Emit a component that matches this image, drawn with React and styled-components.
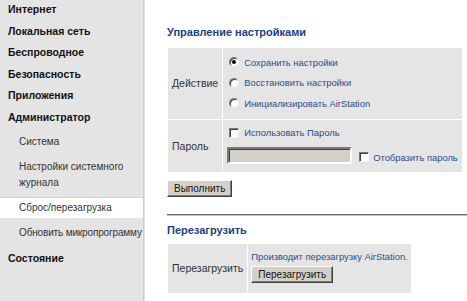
import React from "react";
import styled, { createGlobalStyle } from "styled-components";

const GlobalStyle = createGlobalStyle`
  html, body {
    margin: 0;
    padding: 0;
    background: #ffffff;
    font-family: "Liberation Sans", Arial, sans-serif;
  }
`;

const Page = styled.div`
  display: flex;
  height: 301px;
  overflow: hidden;
`;

const Sidebar = styled.nav`
  display: flex;
  flex-direction: column;
  width: 143px;
  flex-shrink: 0;
  background: #e4e4e4;
  border-right: 1px solid #cdcdcd;
  box-shadow: 1px 0 0 #e0e0e0;
  overflow: hidden;
`;

const MenuItem = styled.div`
  margin-top: ${(p) => p.$gap || "0"};
  padding: 1px 4px 4px 8px;
  line-height: 16.6px;
  font-size: 10.5px;
  font-weight: 700;
  color: #111;
`;

const SubItem = styled.div`
  margin: 2px 0 3px;
  padding: 2px 0 2px 19px;
  line-height: 16px;
  font-size: 10px;
  color: #333;
  white-space: nowrap;
  letter-spacing: ${(p) => (p.$tight ? "-0.15px" : "0")};
  background: ${(p) => (p.$active ? "#ffffff" : "transparent")};
  box-shadow: ${(p) => (p.$active ? "0 -1px 0 #d4d4d4" : "none")};
`;

const Main = styled.main`
  flex: 1;
  padding: 25px 0 0 23px;
  min-width: 0;
`;

const Title = styled.h2`
  margin: 0 0 ${(p) => p.$gap || "8px"};
  font-size: 11px;
  line-height: 14px;
  font-weight: 700;
  color: #1c3f86;
`;

const FormTable = styled.table`
  border-collapse: collapse;
  font-size: 9.4px;
`;

const LabelCell = styled.td`
  background: #e5e5e5;
  border: 1px solid #ffffff;
  padding: 0 4px;
  font-size: 10.5px;
  color: #333;
  vertical-align: middle;
  white-space: nowrap;
`;

const ValueCell = styled.td`
  background: #e5e5e5;
  border: 1px solid #ffffff;
  padding: ${(p) => p.$pad || "4px 4px 5px"};
  color: #2a4c8e;
  vertical-align: top;
  white-space: nowrap;
`;

const Option = styled.label`
  display: flex;
  align-items: center;
  gap: 5px;
  height: ${(p) => p.$h || "20.5px"};
  padding-left: 2px;
`;

const Radio = styled.span`
  position: relative;
  width: 10px;
  height: 10px;
  box-sizing: border-box;
  border-radius: 50%;
  background: #ffffff;
  border: 1px solid;
  border-color: #7a7a7a #e8e8e8 #e8e8e8 #7a7a7a;
  box-shadow: inset 1px 1px 0 #404040;

  &::after {
    content: "";
    display: ${(p) => (p.$checked ? "block" : "none")};
    position: absolute;
    left: 2px;
    top: 2px;
    width: 4px;
    height: 4px;
    border-radius: 50%;
    background: #000;
  }
`;

const Check = styled.span`
  width: 10px;
  height: 10px;
  box-sizing: border-box;
  background: #ffffff;
  border: 1px solid;
  border-color: #7a7a7a #f4f4f4 #f4f4f4 #7a7a7a;
  box-shadow: inset 1px 1px 0 #404040;
  flex-shrink: 0;
`;

const InputRow = styled.div`
  display: flex;
  align-items: flex-end;
  gap: 7px;
  margin-top: 5px;
`;

const TextInput = styled.input`
  width: 125px;
  height: 17px;
  box-sizing: border-box;
  margin: 0;
  background: #d4d0c8;
  border: 2px solid;
  border-color: #7a7a7a #ffffff #ffffff #7a7a7a;
  box-shadow: inset 1px 1px 0 #404040;
`;

const InlineCheck = styled.label`
  display: flex;
  align-items: center;
  gap: 4px;
  padding-bottom: 1px;
`;

const Button = styled.button`
  display: block;
  height: 17px;
  margin: ${(p) => p.$margin || "0"};
  padding: 0 6px;
  background: #d4d0c8;
  font-family: "Liberation Sans", Arial, sans-serif;
  font-size: 10px;
  line-height: 13px;
  color: #111;
  border: 1px solid;
  border-color: #ffffff #404040 #404040 #ffffff;
  box-shadow: inset -1px -1px 0 #808080;
  cursor: pointer;
`;

const Divider = styled.hr`
  margin: 17px 0 7px;
  height: 0;
  border: 0;
  border-top: 1px solid #6a6a6a;
  border-bottom: 1px solid #c4c4c4;
`;

const Description = styled.div`
  line-height: 14px;
  margin-bottom: 2px;
`;

const topItems = ["Интернет", "Локальная сеть", "Беспроводное", "Безопасность", "Приложения", "Администратор"];

const adminItems = [
  { label: "Система" },
  { label: <>Настройки системного<br />журнала</> },
  { label: "Сброс/перезагрузка", active: true },
  { label: "Обновить микропрограмму", tight: true },
];

const App = () => (
  <>
    <GlobalStyle />
    <Page>
      <Sidebar>
        {topItems.map((item) => (
          <MenuItem key={item}>{item}</MenuItem>
        ))}
        {adminItems.map((item, i) => (
          <SubItem key={i} $active={item.active} $tight={item.tight}>
            {item.label}
          </SubItem>
        ))}
        <MenuItem $gap="3px">Состояние</MenuItem>
      </Sidebar>

      <Main>
        <Title>Управление настройками</Title>
        <FormTable>
          <tbody>
            <tr>
              <LabelCell>Действие</LabelCell>
              <ValueCell $pad="4px 4px 5px 4px">
                <Option>
                  <Radio $checked />
                  Сохранить настройки
                </Option>
                <Option>
                  <Radio />
                  Восстановить настройки
                </Option>
                <Option>
                  <Radio />
                  Инициализировать AirStation
                </Option>
              </ValueCell>
            </tr>
            <tr>
              <LabelCell>Пароль</LabelCell>
              <ValueCell $pad="4px 4px 8px 4px">
                <Option $h="18px">
                  <Check />
                  Использовать Пароль
                </Option>
                <InputRow>
                  <TextInput type="password" />
                  <InlineCheck>
                    <Check />
                    Отобразить пароль
                  </InlineCheck>
                </InputRow>
              </ValueCell>
            </tr>
          </tbody>
        </FormTable>
        <Button $margin="7px 0 0">Выполнить</Button>

        <Divider />

        <Title $gap="6px">Перезагрузить</Title>
        <FormTable>
          <tbody>
            <tr>
              <LabelCell>Перезагрузить</LabelCell>
              <ValueCell $pad="6px 3px 10px 3px">
                <Description>Производит перезагрузку AirStation.</Description>
                <Button>Перезагрузить</Button>
              </ValueCell>
            </tr>
          </tbody>
        </FormTable>
      </Main>
    </Page>
  </>
);

export default App;
